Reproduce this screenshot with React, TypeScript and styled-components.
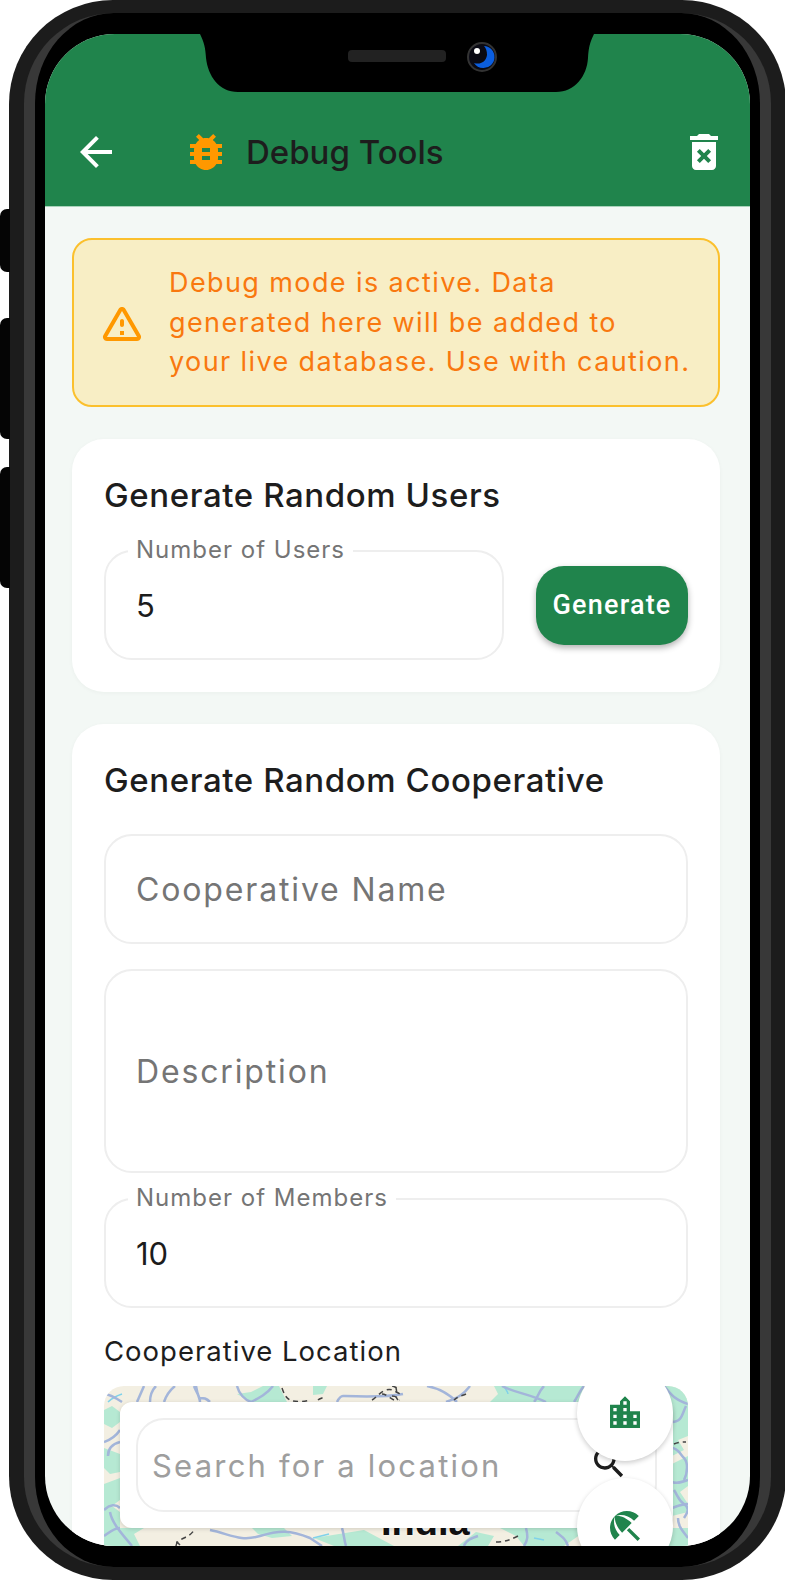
import React from 'react';
import styled, { createGlobalStyle } from 'styled-components';

const Global = createGlobalStyle`
  html, body {
    margin: 0;
    padding: 0;
    background: #fff;
    overflow: hidden;
  }
  body {
    width: 785px;
    height: 1580px;
  }
  * {
    box-sizing: border-box;
  }
`;

const uiFont = `Inter, "Noto Sans", sans-serif`;

const Phone = styled.div`
  position: relative;
  width: 777px;
  height: 1580px;
  margin-left: 9px;
  padding: 13px 15px;
  background: #1c1c1c;
  border-radius: 104px;
`;

const SideButton = styled.div<{ $top: number; $height: number }>`
  position: absolute;
  left: -9px;
  top: ${p => p.$top}px;
  width: 10px;
  height: ${p => p.$height}px;
  background: #050505;
  border-radius: 7px 0 0 7px;
`;

const Bezel = styled.div`
  height: 100%;
  padding: 21px 10px;
  background: #000;
  border-style: solid;
  border-color: #383838;
  border-width: 0 11px;
  border-radius: 90px;
`;

const Screen = styled.div`
  position: relative;
  height: 100%;
  overflow: hidden;
  background: #f3f8f5;
  border-radius: 70px;
`;

const Notch = styled.svg`
  position: absolute;
  left: 155px;
  top: 0;
`;

const Speaker = styled.div`
  position: absolute;
  left: 303px;
  top: 16px;
  width: 98px;
  height: 12px;
  background: #222;
  border-radius: 4px;
`;

const Camera = styled.svg`
  position: absolute;
  left: 422px;
  top: 8px;
`;

const Header = styled.header`
  display: flex;
  align-items: center;
  height: 173px;
  padding: 69px 22px 6px 27px;
  background: #20844c;
  border-bottom: 1px solid #a9d3bb;
`;

const Title = styled.h1`
  flex: 1;
  margin: 0 0 0 16px;
  font: 500 33px ${uiFont};
  letter-spacing: 0;
  color: #1d1d1d;
`;

const BackIcon = styled.svg`
  margin-right: 62px;
  fill: #fff;
`;

const Body = styled.div`
  display: flex;
  flex-direction: column;
  gap: 32px;
  padding: 31px 30px 32px 27px;
`;

const Banner = styled.div`
  display: flex;
  align-items: center;
  gap: 23px;
  height: 169px;
  padding: 0 24px;
  background: #f8eec5;
  border: 2px solid #fbc02d;
  border-radius: 20px;
`;

const BannerText = styled.div`
  font: 400 27px/39.5px ${uiFont};
  letter-spacing: 1.4px;
  color: #f9780f;
  white-space: nowrap;
`;

const Card = styled.section`
  padding: 32px;
  background: #fff;
  border-radius: 32px;
  box-shadow: 0 1px 4px rgba(0, 40, 20, 0.04);
`;

const CardTitle = styled.h2`
  margin: 0;
  font: 500 33px/48px ${uiFont};
  letter-spacing: 0.6px;
  color: #1d1d1d;
`;

const UsersRow = styled.div`
  display: flex;
  align-items: center;
  gap: 32px;
  margin-top: 31px;
`;

const Field = styled.div<{ $height?: number; $top?: number; $flex?: boolean }>`
  position: relative;
  display: flex;
  align-items: center;
  flex: ${p => (p.$flex ? 1 : 'none')};
  height: ${p => p.$height ?? 110}px;
  margin-top: ${p => p.$top ?? 0}px;
  padding: 0 30px;
  background: #fff;
  border: 2px solid #eeeeee;
  border-radius: 28px;
`;

const FieldLabel = styled.label`
  position: absolute;
  left: 22px;
  top: -15px;
  padding: 0 8px;
  background: #fff;
  font: 400 24px/26px ${uiFont};
  letter-spacing: 1px;
  color: #757575;
`;

const Value = styled.span`
  font: 400 31px ${uiFont};
  color: #1c1c1c;
`;

const Placeholder = styled.span`
  font: 400 32px ${uiFont};
  letter-spacing: 1.85px;
  color: #757575;
`;

const GenerateButton = styled.button`
  width: 152px;
  height: 79px;
  padding: 0;
  border: 0;
  border-radius: 28px;
  background: #20844c;
  box-shadow: 0 3px 6px rgba(0, 0, 0, 0.3);
  font: 500 27px Roboto, sans-serif;
  letter-spacing: 1.2px;
  color: #fff;
`;

const LocationLabel = styled.div`
  margin-top: 23px;
  font: 400 27.5px/40px ${uiFont};
  letter-spacing: 1px;
  color: #1d1d1d;
`;

const MapBox = styled.div`
  position: relative;
  height: 240px;
  margin-top: 15px;
  overflow: hidden;
  background: #f3efe2;
  border-radius: 20px;
`;

const MapName = styled.div`
  position: absolute;
  left: 277px;
  top: 112px;
  font: 700 38px/48px "Liberation Sans", sans-serif;
  color: #111;
  text-shadow: 0 0 3px #fff;
`;

const SearchPanel = styled.div`
  position: absolute;
  left: 16px;
  top: 16px;
  width: 553px;
  height: 126px;
  padding: 16px;
  background: #fff;
  border-radius: 12px;
  box-shadow: 0 1px 4px rgba(0, 0, 0, 0.15);
`;

const SearchField = styled.div`
  display: flex;
  align-items: center;
  justify-content: space-between;
  height: 94px;
  padding: 0 26px 4px 14px;
  border: 2px solid #eeeeee;
  border-radius: 28px;
`;

const SearchPlaceholder = styled.span`
  margin-top: 4px;
  font: 400 31px ${uiFont};
  letter-spacing: 2.2px;
  color: #9e9e9e;
`;

const Fab = styled.div<{ $top: number }>`
  position: absolute;
  left: 473px;
  top: ${p => p.$top}px;
  display: flex;
  align-items: center;
  justify-content: center;
  width: 96px;
  height: 96px;
  background: #fff;
  border-radius: 50%;
  box-shadow: 0 2px 5px rgba(0, 0, 0, 0.2);
`;

const Icon = ({ d, size = 48, fill }: { d: string; size?: number; fill: string }) => (
  <svg width={size} height={size} viewBox="0 0 24 24" fill={fill} style={{ flex: 'none' }}>
    <path d={d} />
  </svg>
);

const ICONS = {
  back: 'M20 11H7.83l5.59-5.59L12 4l-8 8 8 8 1.41-1.41L7.83 13H20v-2z',
  bug: 'M20 8h-2.81c-.45-.78-1.07-1.45-1.82-1.96L17 4.41 15.59 3l-2.17 2.17C12.96 5.06 12.49 5 12 5s-.96.06-1.41.17L8.41 3 7 4.41l1.62 1.63C7.88 6.55 7.26 7.22 6.81 8H4v2h2.09c-.05.33-.09.66-.09 1v1H4v2h2v1c0 .34.04.67.09 1H4v2h2.81c1.04 1.79 2.97 3 5.19 3s4.15-1.21 5.19-3H20v-2h-2.09c.05-.33.09-.66.09-1v-1h2v-2h-2v-1c0-.34-.04-.67-.09-1H20V8zm-6 8h-4v-2h4v2zm0-4h-4v-2h4v2z',
  trash: 'M6 19c0 1.1.9 2 2 2h8c1.1 0 2-.9 2-2V7H6v12zm2.46-7.12l1.41-1.41L12 12.59l2.12-2.12 1.41 1.41L13.41 14l2.12 2.12-1.41 1.41L12 15.41l-2.12 2.12-1.41-1.41L10.59 14l-2.13-2.12zM15.5 4l-1-1h-5l-1 1H5v2h14V4z',
  warning: 'M12 5.99L19.53 19H4.47L12 5.99M2.74 18c-.77 1.33.19 3 1.73 3h15.06c1.54 0 2.5-1.67 1.73-3L13.73 4.99c-.77-1.33-2.69-1.33-3.46 0L2.74 18zM11 11v2c0 .55.45 1 1 1s1-.45 1-1v-2c0-.55-.45-1-1-1s-1 .45-1 1zm0 5h2v2h-2z',
  search: 'M15.5 14h-.79l-.28-.27C15.41 12.59 16 11.11 16 9.5 16 5.91 13.09 3 9.5 3S3 5.91 3 9.5 5.91 16 9.5 16c1.61 0 3.09-.59 4.23-1.57l.27.28v.79l5 4.99L20.49 19l-4.99-5zm-6 0C7.01 14 5 11.99 5 9.5S7.01 5 9.5 5 14 7.01 14 9.5 11.99 14 9.5 14z',
  city: 'M15 11V5l-3-3-3 3v2H3v14h18V11h-6zm-8 8H5v-2h2v2zm0-4H5v-2h2v2zm0-4H5V9h2v2zm6 8h-2v-2h2v2zm0-4h-2v-2h2v2zm0-4h-2V9h2v2zm0-4h-2V5h2v2zm6 12h-2v-2h2v2zm0-4h-2v-2h2v2z',
  beach: 'M13.127 14.56l1.43-1.43 6.44 6.443L19.57 21zm4.293-5.73l2.86-2.86c-3.95-3.95-10.35-3.96-14.3-.02 3.93-1.3 8.31-.25 11.44 2.88zM5.95 5.98c-3.94 3.95-3.93 10.35.02 14.3l2.86-2.86C5.7 14.29 4.65 9.91 5.95 5.98zm.02-.02l-.01.01c-.38 3.01 1.17 6.88 4.3 10.02l5.73-5.73c-3.13-3.13-7.01-4.68-10.02-4.3z',
};

// map tile, only the strips around the search panel are ever visible
const MAP_GREEN = [
  'M133 8l14 8h36l-8-16h-16l-12 6z',
  'M209 0h14l-4 8-10 1z',
  'M386 16l8-8-4-8h90v16z',
  'M556 0h28v50l-10 4 6 10-12 6z',
  'M568 78l16-8v30l-8 6 8 12v8l-16 4z',
  'M0 24l8-4 8 6v10l-8 6-8-4z',
  'M0 62l16 6v18l-10 2-6-6z',
  'M0 98l16-6v22l-8 6 8 6v16H0z',
  'M0 142h40l-10 6 6 12H0z',
  'M148 142h32l8 8-20 2-14-4z',
  'M210 152l50-8 30 16h-60z',
  'M372 146l18 4-6 10h-30z',
  'M396 142h84v4l-20 14h-40l-8-10z',
  'M560 142h24v18h-20z',
];

const MAP_ROADS = [
  'M33 16l7-16',
  'M46 16c0-6 2-12 6-16',
  'M60 16c2-6 6-12 11-16',
  'M90 0c2 6 6 10 6 16M96 16c0-4-2-4-4-16M106 16c-4-4-6-4-10-4',
  'M133 0c2 8 8 14 14 16',
  'M147 16c8-4 16-8 22-16',
  'M0 8c6 0 12 4 18 8',
  'M233 16c2-4 4-6 6-6s40 2 60-2',
  'M323 0c10 2 20 6 30 16',
  'M366 0c-6 8-12 12-24 16',
  'M398 0c10 6 28 8 44 16M440 0c-6 6-6 12-10 16',
  'M470 16c4-6 6-12 10-16',
  'M560 0c8 10 12 14 24 18',
  'M568 36c10 0 10-8 14-16',
  'M0 56c6-2 12-6 16-12',
  'M4 70c0-8 4-12 12-14',
  'M0 124c6-6 12-6 16-2',
  'M6 126c2 12 14 24 22 34',
  'M0 150c6-4 10-8 16-8',
  'M106 144c20 4 30 12 50 6s30-6 50 2l12 8',
  'M238 142c2 6 2 12 4 18',
  'M360 160c2-6 8-8 14-10',
  'M420 160c4-6 4-10 2-18',
  'M452 146c8 6 10 8 12 14',
  'M568 62c6 0 8 6 12 10s4 14 0 22',
  'M568 96c6 2 10 0 16-2',
  'M570 104c4 6 4 10 10 14s4 8 0 14',
  'M568 122c6-2 10-4 16-4',
  'M574 132c0 8 4 12 10 20',
];

const MAP_WATER = ['M4 16c4-4 8-6 14-8', 'M209 152l16-4', 'M400 0c2 4 4 6 4 8', 'M430 152l10 2'];

const MAP_BORDERS = [
  'M178 2c2 6 4 10 8 12s14 2 20 0',
  'M214 14c2-2 6-2 8-4',
  'M268 14c4-2 8-8 14-10s10 2 14 4',
  'M290 14c-4-2-8-6-12-6',
  'M292 2c2 6-2 8 2 12',
  'M288 10c6 0 6 4 8 4',
  'M288 0c2 0 4 2 6 2',
  'M362 8c-4 2-8 2-12 6',
  'M72 160c0-4 4-6 8-8s8-4 10-8',
  'M72 156c2 0 4 4 6 4',
  'M392 156c8 0 14-2 22-6',
  'M570 58c4-2 8-2 12-2',
];

const MapTiles = () => (
  <svg width="584" height="240" viewBox="0 0 584 240" style={{ display: 'block' }}>
    {MAP_GREEN.map(d => (
      <path key={d} d={d} fill="#b6e9d3" />
    ))}
    {MAP_WATER.map(d => (
      <path key={d} d={d} fill="none" stroke="#7fd2ea" strokeWidth="1.5" />
    ))}
    {MAP_ROADS.map(d => (
      <path key={d} d={d} fill="none" stroke="#a3b5da" strokeWidth="2.5" />
    ))}
    {MAP_BORDERS.map(d => (
      <path key={d} d={d} fill="none" stroke="#444" strokeWidth="1.5" strokeDasharray="5 4" />
    ))}
  </svg>
);

const App = () => (
  <>
    <Global />
    <Phone>
      <SideButton $top={209} $height={63} />
      <SideButton $top={318} $height={121} />
      <SideButton $top={467} $height={121} />
      <Bezel>
        <Screen>
          <Header>
            <BackIcon width="48" height="48" viewBox="0 0 24 24">
              <path d={ICONS.back} />
            </BackIcon>
            <Icon d={ICONS.bug} fill="#ff9800" />
            <Title>Debug Tools</Title>
            <Icon d={ICONS.trash} fill="#fff" />
          </Header>
          <Notch width="394" height="58" viewBox="0 0 394 58">
            <path d="M0 0h394c-4 8-5.500 14-6 24-1 18-13 34-32 34H38C19 58 8 42 6 24 5.500 14 4 8 0 0z" />
          </Notch>
          <Speaker />
          <Camera width="30" height="30" viewBox="0 0 30 30">
            <circle cx="15" cy="15" r="14" fill="#0a0a14" stroke="#333" strokeWidth="2" />
            <path d="M17 4a11 11 0 0 1-1 22 11 11 0 0 1-9-5c6 2 12-1 13-8 0-4-1-7-3-9z" fill="#0b5ee0" />
            <circle cx="10" cy="9" r="3" fill="#fff" />
          </Camera>
          <Body>
            <Banner>
              <Icon d={ICONS.warning} fill="#ff9800" />
              <BannerText>
                Debug mode is active. Data
                <br />
                generated here will be added to
                <br />
                your live database. Use with caution.
              </BannerText>
            </Banner>
            <Card>
              <CardTitle>Generate Random Users</CardTitle>
              <UsersRow>
                <Field $flex>
                  <FieldLabel>Number of Users</FieldLabel>
                  <Value>5</Value>
                </Field>
                <GenerateButton>Generate</GenerateButton>
              </UsersRow>
            </Card>
            <Card>
              <CardTitle>Generate Random Cooperative</CardTitle>
              <Field $top={30}>
                <Placeholder>Cooperative Name</Placeholder>
              </Field>
              <Field $top={25} $height={204}>
                <Placeholder>Description</Placeholder>
              </Field>
              <Field $top={25}>
                <FieldLabel>Number of Members</FieldLabel>
                <Value>10</Value>
              </Field>
              <LocationLabel>Cooperative Location</LocationLabel>
              <MapBox>
                <MapTiles />
                <MapName>India</MapName>
                <SearchPanel>
                  <SearchField>
                    <SearchPlaceholder>Search for a location</SearchPlaceholder>
                    <Icon d={ICONS.search} size={40} fill="#1c1c1c" />
                  </SearchField>
                </SearchPanel>
                <Fab $top={-21}>
                  <Icon d={ICONS.city} size={40} fill="#20844c" />
                </Fab>
                <Fab $top={92}>
                  <Icon d={ICONS.beach} size={40} fill="#20844c" />
                </Fab>
              </MapBox>
            </Card>
          </Body>
        </Screen>
      </Bezel>
    </Phone>
  </>
);

export default App;
